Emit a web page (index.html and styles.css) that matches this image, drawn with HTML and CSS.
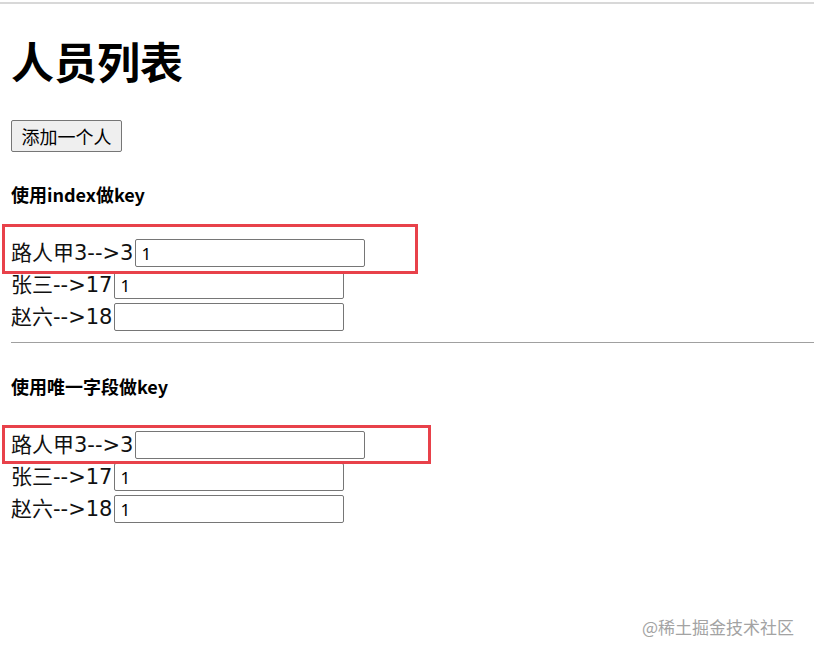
FILE: index.html
```html
<!DOCTYPE html>
<html lang="zh">
<head>
<meta charset="utf-8">
<title>人员列表</title>
<link rel="stylesheet" href="styles.css">
</head>
<body>
<div class="topline"></div>
<main class="page">
  <h1 class="title">人员列表</h1>
  <button class="add-btn" type="button">添加一个人</button>

  <h4 class="section-title">使用index做key</h4>
  <div class="list">
    <div class="row"><span class="label">路人甲3--&gt;3</span><input class="field" type="text" value="1"></div>
    <div class="row"><span class="label">张三--&gt;17</span><input class="field" type="text" value="1"></div>
    <div class="row"><span class="label">赵六--&gt;18</span><input class="field" type="text" value=""></div>
  </div>

  <hr class="divider">

  <h4 class="section-title second">使用唯一字段做key</h4>
  <div class="list">
    <div class="row"><span class="label">路人甲3--&gt;3</span><input class="field" type="text" value=""></div>
    <div class="row"><span class="label">张三--&gt;17</span><input class="field" type="text" value="1"></div>
    <div class="row"><span class="label">赵六--&gt;18</span><input class="field" type="text" value="1"></div>
  </div>
</main>

<div class="mark mark-1"></div>
<div class="mark mark-2"></div>
<div class="watermark">@稀土掘金技术社区</div>
</body>
</html>
```

FILE: styles.css
```css
html, body {
  margin: 0;
  padding: 0;
  background: #fff;
}
body {
  position: relative;
  width: 814px;
  height: 656px;
  overflow: hidden;
  font-family: "Noto Sans", "Noto Sans CJK SC", sans-serif;
  color: #000;
}
.topline {
  margin-top: 2px;
  height: 0;
  border-top: 2px solid #d8d8d8;
}
.page {
  padding-left: 11px;
}
.title {
  margin: 28px 0 0;
  font-size: 43px;
  line-height: 56px;
  font-weight: 700;
  font-family: "Noto Sans CJK SC", sans-serif;
}
.add-btn {
  display: block;
  margin-top: 32px;
  width: 111px;
  height: 32px;
  padding: 0;
  font-family: "Noto Sans CJK SC", sans-serif;
  font-size: 18px;
  line-height: 30px;
  color: #000;
  background: #efefef;
  border: 1px solid #767676;
  border-radius: 2px;
}
.section-title {
  margin: 28px 0 0;
  font-size: 18px;
  line-height: 28px;
  font-weight: 700;
  font-family: "Noto Sans CJK SC", sans-serif;
}
.section-title.second {
  margin-top: 29px;
}
.list {
  margin-top: 29px;
}
.row {
  display: flex;
  align-items: center;
  height: 32px;
}
.label {
  font-family: "DejaVu Sans", "Noto Sans CJK SC", sans-serif;
  font-size: 21px;
  line-height: 32px;
  white-space: nowrap;
  color: #111;
}
.field {
  box-sizing: border-box;
  width: 230px;
  height: 28px;
  margin: 0 0 0 2px;
  padding: 0 5px;
  font-family: "Noto Sans", sans-serif;
  font-size: 17px;
  color: #000;
  background: #fff;
  border: 1px solid #767676;
  border-radius: 2px;
}
.divider {
  margin: 9px 0 0;
  height: 0;
  border: 0;
  border-top: 1px solid #a0a0a0;
}
.mark {
  position: absolute;
  box-sizing: border-box;
  border: 3px solid #e8414a;
}
.mark-1 {
  left: 2px;
  top: 224px;
  width: 416px;
  height: 50px;
}
.mark-2 {
  left: 2px;
  top: 425px;
  width: 429px;
  height: 39px;
}
.watermark {
  position: absolute;
  left: 642px;
  top: 615px;
  font-family: "Noto Sans CJK SC", sans-serif;
  font-size: 17px;
  line-height: 24px;
  color: #a3a3a3;
}
```
